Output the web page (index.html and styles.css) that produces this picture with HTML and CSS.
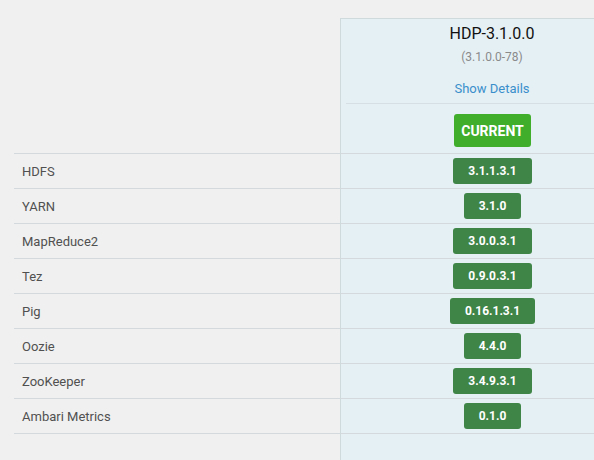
FILE: index.html
```html
<!DOCTYPE html>
<html>
<head>
<meta charset="utf-8">
<link rel="stylesheet" href="styles.css">
</head>
<body>
<div class="page">
  <div class="table">
    <div class="label-col">
      <div class="head-spacer"></div>
      <div class="label">HDFS</div>
      <div class="label">YARN</div>
      <div class="label">MapReduce2</div>
      <div class="label">Tez</div>
      <div class="label">Pig</div>
      <div class="label">Oozie</div>
      <div class="label">ZooKeeper</div>
      <div class="label">Ambari Metrics</div>
      <div class="label filler"></div>
    </div>
    <div class="version-col">
      <div class="version-inner">
        <div class="version-head">
          <div class="head-info">
            <div class="title">HDP-3.1.0.0</div>
            <div class="subtitle">(3.1.0.0-78)</div>
            <a class="details" href="#">Show Details</a>
          </div>
          <div class="current-wrap"><span class="current">CURRENT</span></div>
        </div>
        <div class="cell"><span class="badge">3.1.1.3.1</span></div>
        <div class="cell"><span class="badge">3.1.0</span></div>
        <div class="cell"><span class="badge">3.0.0.3.1</span></div>
        <div class="cell"><span class="badge">0.9.0.3.1</span></div>
        <div class="cell"><span class="badge">0.16.1.3.1</span></div>
        <div class="cell"><span class="badge">4.4.0</span></div>
        <div class="cell"><span class="badge">3.4.9.3.1</span></div>
        <div class="cell"><span class="badge">0.1.0</span></div>
        <div class="cell filler"></div>
      </div>
    </div>
  </div>
</div>
</body>
</html>
```

FILE: styles.css
```css
html, body {
  margin: 0;
  padding: 0;
  background: #f0f0f0;
  overflow: hidden;
  width: 594px;
  height: 460px;
}

.page {
  padding: 18px 0 0 14px;
  font-family: Roboto, "Liberation Sans", sans-serif;
}

.table {
  display: flex;
  width: 580px;
}

.label-col {
  width: 326px;
  flex-shrink: 0;
  display: flex;
  flex-direction: column;
}

.head-spacer {
  height: 135px;
}

.label {
  height: 34px;
  border-top: 1px solid #d3d9dc;
  padding-left: 8px;
  display: flex;
  align-items: center;
  font-size: 13px;
  color: #505050;
}

.label.filler,
.cell.filler {
  height: 26px;
}

.version-col {
  width: 253px;
  flex-shrink: 0;
  overflow: hidden;
  background: #e5f0f5;
  border-left: 1px solid #cfdadd;
  border-top: 1px solid #cfdadd;
}

.version-inner {
  width: 303px;
  display: flex;
  flex-direction: column;
}

.version-head {
  height: 134px;
  display: flex;
  flex-direction: column;
}

.head-info {
  margin-left: 5px;
  padding-top: 4px;
  padding-bottom: 5px;
  padding-right: 6px;
  border-bottom: 1px solid #d6e0e4;
  display: flex;
  flex-direction: column;
  align-items: center;
}

.title {
  font-size: 16px;
  line-height: 22px;
  color: #111;
}

.subtitle {
  margin-top: 4px;
  font-size: 12px;
  line-height: 16px;
  color: #8a8a8a;
}

.details {
  margin-top: 15px;
  font-size: 13px;
  line-height: 18px;
  color: #3a8fcb;
  text-decoration: none;
}

.current-wrap {
  display: flex;
  justify-content: center;
  padding-top: 10px;
}

.current {
  height: 33px;
  padding: 0 7px;
  display: flex;
  align-items: center;
  background: #40ae2b;
  color: #fff;
  font-weight: bold;
  font-size: 14px;
  border-radius: 3px;
}

.cell {
  height: 34px;
  border-top: 1px solid #d3d9dc;
  display: flex;
  align-items: center;
  justify-content: center;
}

.badge {
  height: 26px;
  padding: 0 15px;
  display: flex;
  align-items: center;
  background: #3f8547;
  color: #fff;
  font-weight: bold;
  font-size: 12px;
  border-radius: 3px;
}
```
